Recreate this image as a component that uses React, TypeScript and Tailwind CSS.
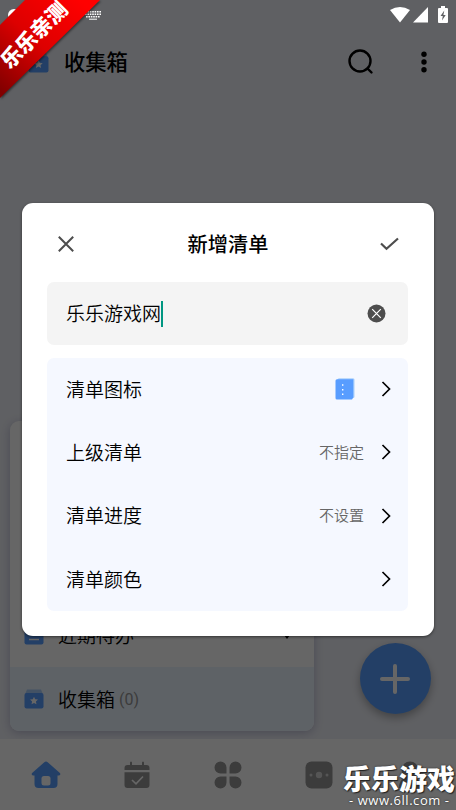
import type { ReactNode } from "react";

const options = [
  { label: "清单图标", icon: true },
  { label: "上级清单", value: "不指定" },
  { label: "清单进度", value: "不设置" },
  { label: "清单颜色" },
];

const BoxIcon = ({ className }: { className?: string }) => (
  <svg viewBox="0 0 20 20" className={className}>
    <path d="M3 0.5h14l2 5H1z" fill="#a9cdfb" />
    <rect x="0.5" y="4" width="19" height="15.5" rx="2" fill="#589dff" />
    <path d="m10 7.7 1.2 2.6 2.8.3-2.1 1.9.6 2.8-2.5-1.4-2.5 1.4.6-2.8L6 10.6l2.8-.3z" fill="#fff" />
  </svg>
);

const NotebookIcon = () => (
  <svg width="20" height="22" viewBox="0 0 20 22">
    <rect x="2.5" y="0.3" width="17" height="19.7" rx="1.5" fill="#a9cffc" />
    <path d="M2 1.2h16.3v18.3L17 21.5H2A1.5 1.5 0 0 1 .5 20V2.7A1.5 1.5 0 0 1 2 1.2z" fill="#589dff" />
    <path d="M7 6.300h1.400v1.400H7zM7 11h1.400v1.400H7zM7 15.500h1.400v1.400H7z" fill="#fff" />
  </svg>
);

const Chevron = () => (
  <svg width="10" height="16" viewBox="0 0 10 16" fill="none" stroke="#000" strokeWidth="1.7">
    <path d="m1.500 1 7 7-7 7" />
  </svg>
);

const StatusBar = () => (
  <div className="absolute inset-x-0 top-0 z-20 flex h-[30px] items-center justify-end pr-[8px]">
    <svg width="20" height="16" viewBox="0 0 20 16" fill="#fff">
      <path d="M0 3Q10-3 20 3L10 15.500z" />
    </svg>
    <svg width="15" height="16" viewBox="0 0 15 16" fill="#fff" className="ml-[3px]">
      <path d="M15 0v15.500H0z" />
    </svg>
    <svg width="10" height="18" viewBox="0 0 10 18" className="ml-[10px]">
      <path d="M3 0h4v2h2q1 0 1 1v13q0 1-1 1H1q-1 0-1-1V3q0-1 1-1h2z" fill="#fff" />
      <path d="M6.300 4.500 2.500 10h2.300l-.8 4.500L7.700 9H5.400z" fill="#5f6063" />
    </svg>
    {/* Keyboard notification */}
    <svg width="16" height="10" viewBox="0 0 16 10" className="absolute top-[11px] left-[85px]" stroke="#fff">
      <path d="M0 .8h16M0 3.300h16M1 5.800h14" strokeWidth="1.500" strokeDasharray="1.600 .8" />
      <path d="M4 8.200h8" strokeWidth="1" />
    </svg>
    <span className="absolute top-[9px] left-[8px] h-[12px] w-[12px] rounded-full bg-white" />
  </div>
);

const Header = () => (
  <header className="flex h-[64px] shrink-0 items-center pl-[28px]">
    <BoxIcon className="mt-[1px] size-[21px]" />
    <h1 className="-mt-[2px] ml-[15px] flex-1 text-[21.3px] font-medium">收集箱</h1>
    <svg width="26" height="26" viewBox="0 0 26 26" fill="none" stroke="#000" strokeWidth="2.400">
      <circle cx="12" cy="12" r="10.500" />
      <path d="m19.500 19.500 4 4" strokeLinecap="round" />
    </svg>
    <svg width="6" height="22" viewBox="0 0 6 22" className="mr-[29px] ml-[47px]">
      <circle cx="3" cy="3.300" r="2.700" />
      <circle cx="3" cy="11" r="2.700" />
      <circle cx="3" cy="18.700" r="2.700" />
    </svg>
  </header>
);

const NavItem = ({ children }: { children: ReactNode }) => (
  <div className="flex flex-1 items-center justify-center">{children}</div>
);

const BottomNav = () => (
  <nav className="flex h-[71px] shrink-0 bg-white text-[#969696]">
    <NavItem>
      <svg width="30" height="28" viewBox="0 0 30 28" fill="#589fff">
        <path d="M13.300 1.200Q15 0 16.700 1.200L28.900 12.100q1.200 1.600-.9 2.300H26.500V23q0 4-4 4h-15q-4 0-4-4V14.400H2q-2.100-.7-.9-2.300z" />
        <rect x="10.500" y="15" width="9" height="9.500" rx="2.500" fill="#fff" />
      </svg>
    </NavItem>
    <NavItem>
      <svg width="26" height="28" viewBox="0 0 26 28" fill="currentColor">
        <path d="M.5 9V7q0-3 3-3H6V1.500q1-2 2 0V4h10V1.500q1-2 2 0V4h2.500q3 0 3 3v2zM.5 11.300h25V24q0 3-3 3h-19q-3 0-3-3z" />
        <path d="m8 19 4 3.800 7-7.300" fill="none" stroke="#fff" strokeWidth="1.700" />
      </svg>
    </NavItem>
    <NavItem>
      <svg width="28" height="28" viewBox="0 0 28 28" fill="currentColor">
        <path d="M6.500.5a6 6 0 0 1 6 6V12.500h-6a6 6 0 0 1 0-12zM21.500.5a6 6 0 0 1 0 12h-6V6.500a6 6 0 0 1 6-6zM6.500 15.500h6v6a6 6 0 1 1-6-6zM15.500 15.500h6a6 6 0 1 1-6 6z" />
      </svg>
    </NavItem>
    <NavItem>
      <svg width="28" height="28" viewBox="0 0 28 28" fill="currentColor">
        <rect x=".5" y=".5" width="27" height="27" rx="6" />
        <g fill="#fff" opacity=".6">
          <circle cx="14" cy="14" r="3.200" />
          <circle cx="6" cy="14" r="1.500" />
          <circle cx="22" cy="14" r="1.500" />
        </g>
      </svg>
    </NavItem>
    <NavItem>
      <svg width="28" height="28" viewBox="0 0 28 28" fill="currentColor">
        <circle cx="14" cy="9" r="8.500" />
        <path d="M3 27q0-11 11-11t11 11z" />
      </svg>
    </NavItem>
  </nav>
);

const Dialog = () => (
  <section className="absolute top-[203px] left-[22px] z-10 flex h-[433px] w-[412px] flex-col rounded-[11px] bg-white px-[25px] shadow-[0_1px_3px_rgba(0,0,0,0.5)]">
    <div className="flex h-[79px] shrink-0 items-center justify-between pt-[3px] pr-[10px] pl-[11px]">
      <svg width="16" height="16" viewBox="0 0 16 16" fill="none" stroke="#4d4d4d" strokeWidth="2">
        <path d="m.8.800 14.400 14.400M15.200.800.800 15.200" />
      </svg>
      <h2 className="ml-[2px] text-[20.2px] font-medium">新增清单</h2>
      <svg width="19" height="14" viewBox="0 0 19 14" fill="none" stroke="#4d4d4d" strokeWidth="2.2">
        <path d="m1 6.500 5.500 5.200L18 1.500" />
      </svg>
    </div>
    <div className="flex h-[63px] w-[361px] shrink-0 items-center rounded-[7px] bg-[#f4f4f4] pr-[22px] pl-[19px]">
      <span className="text-[19px] font-[350]">乐乐游戏网</span>
      <span className="h-[26px] w-[2px] bg-[#009681]" />
      <svg width="19" height="19" viewBox="0 0 19 19" className="ml-auto">
        <circle cx="9.500" cy="9.500" r="9" fill="#4d4d4d" />
        <path d="m5.200 5.200 8.600 8.600m0-8.600-8.600 8.600" stroke="#fff" strokeWidth="1.200" />
      </svg>
    </div>
    <ul className="mt-[13px] flex h-[253px] w-[361px] flex-col rounded-[7px] bg-[#f5f8ff]">
      {options.map((option) => (
        <li key={option.label} className="flex flex-1 items-center pr-[17px] pb-[1px] pl-[19px]">
          <span className="flex-1 text-[19px] font-[350]">{option.label}</span>
          {option.icon && <span className="mr-[9px]"><NotebookIcon /></span>}
          {option.value && <span className="text-[15px] font-[350] text-[#666]">{option.value}</span>}
          <span className="ml-[17px]"><Chevron /></span>
        </li>
      ))}
    </ul>
  </section>
);

const Ribbon = () => (
  <div className="absolute top-0 left-0 z-30 h-[104px] w-[104px]">
    <svg width="104" height="104" viewBox="0 0 104 104" className="drop-shadow-[1px_1px_1px_rgba(0,0,0,0.5)]">
      <defs>
        <linearGradient id="ribbon" gradientUnits="userSpaceOnUse" x1="80" y1="0" x2="0" y2="90">
          <stop offset="0" stopColor="#ff0000" />
          <stop offset=".5" stopColor="#dd0000" />
          <stop offset="1" stopColor="#820000" />
        </linearGradient>
      </defs>
      <path d="M25 0h75L0 98V25z" fill="url(#ribbon)" />
    </svg>
    <span className="absolute top-[20px] left-[-9px] w-[84px] -rotate-45 text-center text-[21px] leading-[28px] font-black whitespace-nowrap text-white">
      乐乐亲测
    </span>
  </div>
);

const Watermark = () => (
  <div className="absolute top-[762px] left-[343px] z-30 w-[113px] text-white">
    <div className="text-[28px] leading-[32px] font-black whitespace-nowrap [text-shadow:0_0_2px_#222,1px_1px_1px_#222]">
      乐乐游戏
    </div>
    <div className="pl-[6px] font-['Open_Sans',sans-serif] text-[13px] leading-[13px] tracking-[0.55px] whitespace-nowrap [text-shadow:0_0_2px_#222]">
      - www.6ll.com -
    </div>
  </div>
);

const App = () => {
  return (
    <div className="relative flex h-[810px] w-[456px] flex-col overflow-hidden bg-[#eef0f7] pt-[30px] font-['Noto_Sans_CJK_SC',sans-serif] text-black">
      <Header />
      <main className="flex flex-1 items-end pb-[8px] pl-[10px]">
        <div className="flex h-[310px] w-[304px] flex-col justify-end overflow-hidden rounded-[9px] bg-white shadow-[0_2px_10px_rgba(60,60,120,0.3)]">
          <div className="flex h-[64px] items-center pl-[14px]">
            <svg width="20" height="20" viewBox="0 0 20 20">
              <rect x=".5" y="1" width="19" height="18.500" rx="2" fill="#589dff" />
              <path d="M5 8.500h10M5 14.500h10" stroke="#fff" strokeWidth="1.500" />
            </svg>
            <span className="ml-[14px] flex-1 text-[19px] font-[350]">近期待办</span>
            <svg width="12" height="8" viewBox="0 0 12 8" className="mr-[21px]">
              <path d="M0 0h12L6 8z" />
            </svg>
          </div>
          <div className="flex h-[64px] items-center bg-[#ebf5ff] pl-[14px]">
            <BoxIcon className="size-[20px]" />
            <span className="ml-[14px] text-[19px] font-[350]">收集箱</span>
            <span className="mt-[2px] ml-[4px] font-[Roboto,sans-serif] text-[16px] text-[#969696]">(0)</span>
          </div>
        </div>
        <button className="mb-[17px] ml-[46px] flex size-[71px] items-center justify-center rounded-full bg-[#589fff] shadow-[0_4px_8px_rgba(0,0,0,0.3)]">
          <svg width="32" height="32" viewBox="0 0 32 32" stroke="#fff" strokeWidth="4" strokeLinecap="round" className="mr-[1px]">
            <path d="M16 3v26M3 16h26" />
          </svg>
        </button>
      </main>
      <BottomNav />
      <div className="absolute inset-0 bg-black/60" />
      <StatusBar />
      <Dialog />
      <Ribbon />
      <Watermark />
    </div>
  );
};

export default App;
